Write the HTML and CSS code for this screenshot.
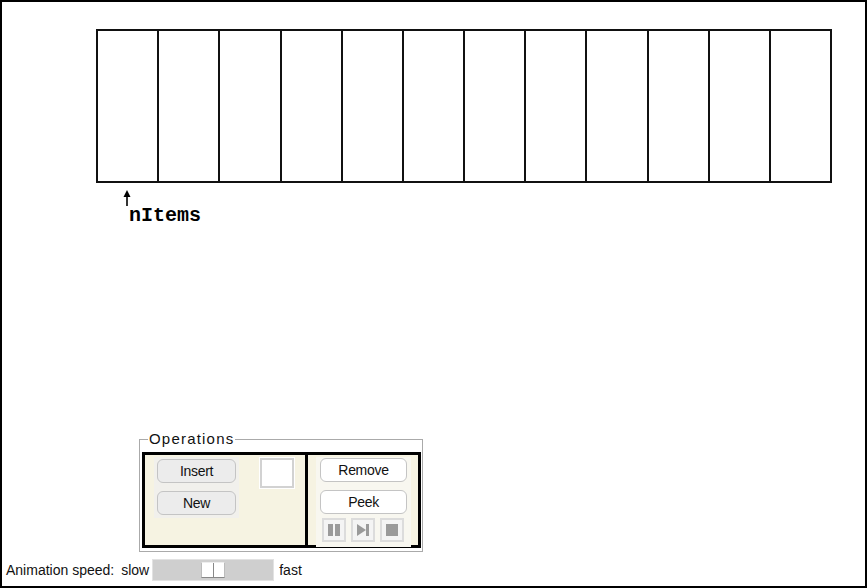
FILE: index.html
```html
<!DOCTYPE html>
<html lang="en">
<head>
    <meta charset="UTF-8">
    <title>Array</title>
    <link rel="stylesheet" href="styles.css">
</head>
<body>
    <div class="frame">
        <div class="array">
            <div class="cell"></div>
            <div class="cell"></div>
            <div class="cell"></div>
            <div class="cell"></div>
            <div class="cell"></div>
            <div class="cell"></div>
            <div class="cell"></div>
            <div class="cell"></div>
            <div class="cell"></div>
            <div class="cell"></div>
            <div class="cell"></div>
            <div class="cell"></div>
        </div>
        <div class="pointer">
            <svg class="arrow" width="10" height="16" viewBox="0 0 10 16">
                <line x1="5" y1="4" x2="5" y2="16" stroke="#000" stroke-width="1.6"/>
                <polygon points="5,0 1.5,7 8.5,7" fill="#000"/>
            </svg>
            <span class="label">nItems</span>
        </div>

        <fieldset class="operations">
            <legend>Operations</legend>
            <div class="ops-box">
                <div class="ops-left">
                    <div class="btn-panel">
                        <button class="btn gray">Insert</button>
                        <button class="btn gray">New</button>
                    </div>
                    <div class="input-wrap"><input type="text" class="value-input"></div>
                </div>
                <div class="ops-right">
                    <div class="btn-panel light">
                        <button class="btn white">Remove</button>
                        <button class="btn white">Peek</button>
                        <div class="controls">
                            <span class="ctrl">
                                <svg width="14" height="14" viewBox="0 0 14 14"><rect x="1" y="1" width="5" height="12" fill="#9a9a9a"/><rect x="8" y="1" width="5" height="12" fill="#9a9a9a"/></svg>
                            </span>
                            <span class="ctrl">
                                <svg width="14" height="14" viewBox="0 0 14 14"><polygon points="1,1 10,7 1,13" fill="#9a9a9a"/><rect x="10" y="1" width="3" height="12" fill="#9a9a9a"/></svg>
                            </span>
                            <span class="ctrl">
                                <svg width="14" height="14" viewBox="0 0 14 14"><rect x="1" y="1" width="12" height="12" fill="#9a9a9a"/></svg>
                            </span>
                        </div>
                    </div>
                </div>
            </div>
        </fieldset>

        <div class="speed">
            <span class="speed-label">Animation speed:</span>
            <span>slow</span>
            <div class="slider"><div class="thumb"></div></div>
            <span>fast</span>
        </div>
    </div>
</body>
</html>
```

FILE: styles.css
```css
body {
    margin: 0;
    font-family: "Liberation Sans", Arial, sans-serif;
    background-color: #fff;
}

.frame {
    width: 867px;
    height: 588px;
    box-sizing: border-box;
    border: 2px solid #000;
    padding-top: 27px;
    display: flex;
    flex-direction: column;
}

.array {
    margin-left: 94px;
    width: 736px;
    height: 154px;
    box-sizing: border-box;
    border: 2px solid #111;
    border-left: none;
    display: grid;
    grid-template-columns: repeat(12, 1fr);
}

.array .cell {
    border-left: 2px solid #111;
}

.pointer {
    margin-left: 120px;
    margin-top: 7px;
    display: flex;
    flex-direction: column;
    align-items: flex-start;
}

.pointer .label {
    font-family: "Courier New", "Liberation Mono", monospace;
    font-weight: bold;
    font-size: 20px;
    line-height: 20px;
    margin-left: 7px;
}

.operations {
    margin: auto 0 0 137px;
    width: 284px;
    box-sizing: border-box;
    border: 1px solid #aaa;
    padding: 5px 1px 3px 2px;
    flex-shrink: 0;
}

.operations legend {
    font-size: 15px;
    letter-spacing: 1.2px;
    color: #111;
    padding: 0 1px;
    margin-left: 6px;
    line-height: 16px;
}

.ops-box {
    display: flex;
    height: 96px;
    box-sizing: border-box;
    border: 3px solid #000;
    background-color: #f6f3e2;
}

.ops-left {
    width: 163px;
    flex-shrink: 0;
    border-right: 3px solid #000;
    display: flex;
    align-items: flex-start;
    padding: 2px 0 0 9px;
    box-sizing: border-box;
}

.ops-right {
    flex-grow: 1;
    padding: 2px 0 0 8px;
}

.btn-panel {
    width: 85px;
    background-color: #f1f0ec;
    padding: 2px 3px 3px;
    box-sizing: border-box;
    display: flex;
    flex-direction: column;
    gap: 8px;
}

.btn-panel.light {
    width: 95px;
    height: 90px;
    background-color: #f8f7f0;
    padding: 1px 4px 0;
    gap: 8px;
}

.btn {
    height: 24px;
    font-family: "Liberation Sans", Arial, sans-serif;
    font-size: 14px;
    color: #111;
    border: 1px solid #c4c4c4;
    border-radius: 6px;
    padding: 0;
    letter-spacing: -0.3px;
}

.btn.gray {
    background-color: #ececec;
}

.btn.white {
    background-color: #fff;
}

.input-wrap {
    margin-left: 20px;
    padding: 1px;
    background-color: #fff;
}

.value-input {
    display: block;
    width: 34px;
    height: 30px;
    box-sizing: border-box;
    border: 2px solid #d2d2d2;
    padding: 0;
    background-color: #fff;
}

.controls {
    display: flex;
    gap: 5px;
    margin-top: -4px;
    padding-left: 2px;
}

.ctrl {
    width: 24px;
    height: 24px;
    box-sizing: border-box;
    border: 2px solid #dcdcdc;
    background-color: #f4f4f4;
    display: flex;
    align-items: center;
    justify-content: center;
}

.speed {
    display: flex;
    align-items: center;
    height: 22px;
    margin: 7px 0 5px 4px;
    font-size: 14px;
    color: #111;
}

.speed-label {
    margin-right: 7px;
}

.slider {
    width: 122px;
    height: 22px;
    box-sizing: border-box;
    background-color: #cfcfcf;
    border: 1px solid #e2e2e2;
    margin: 0 5px 0 3px;
    display: flex;
    align-items: center;
    padding-left: 48px;
}

.thumb {
    width: 24px;
    height: 16px;
    box-sizing: border-box;
    background: linear-gradient(to right, #fff 0, #fff 11px, #888 11px, #888 12px, #fff 12px);
    border: 1px solid #bbb;
    border-top-color: #eee;
    border-bottom-color: #888;
}
```
